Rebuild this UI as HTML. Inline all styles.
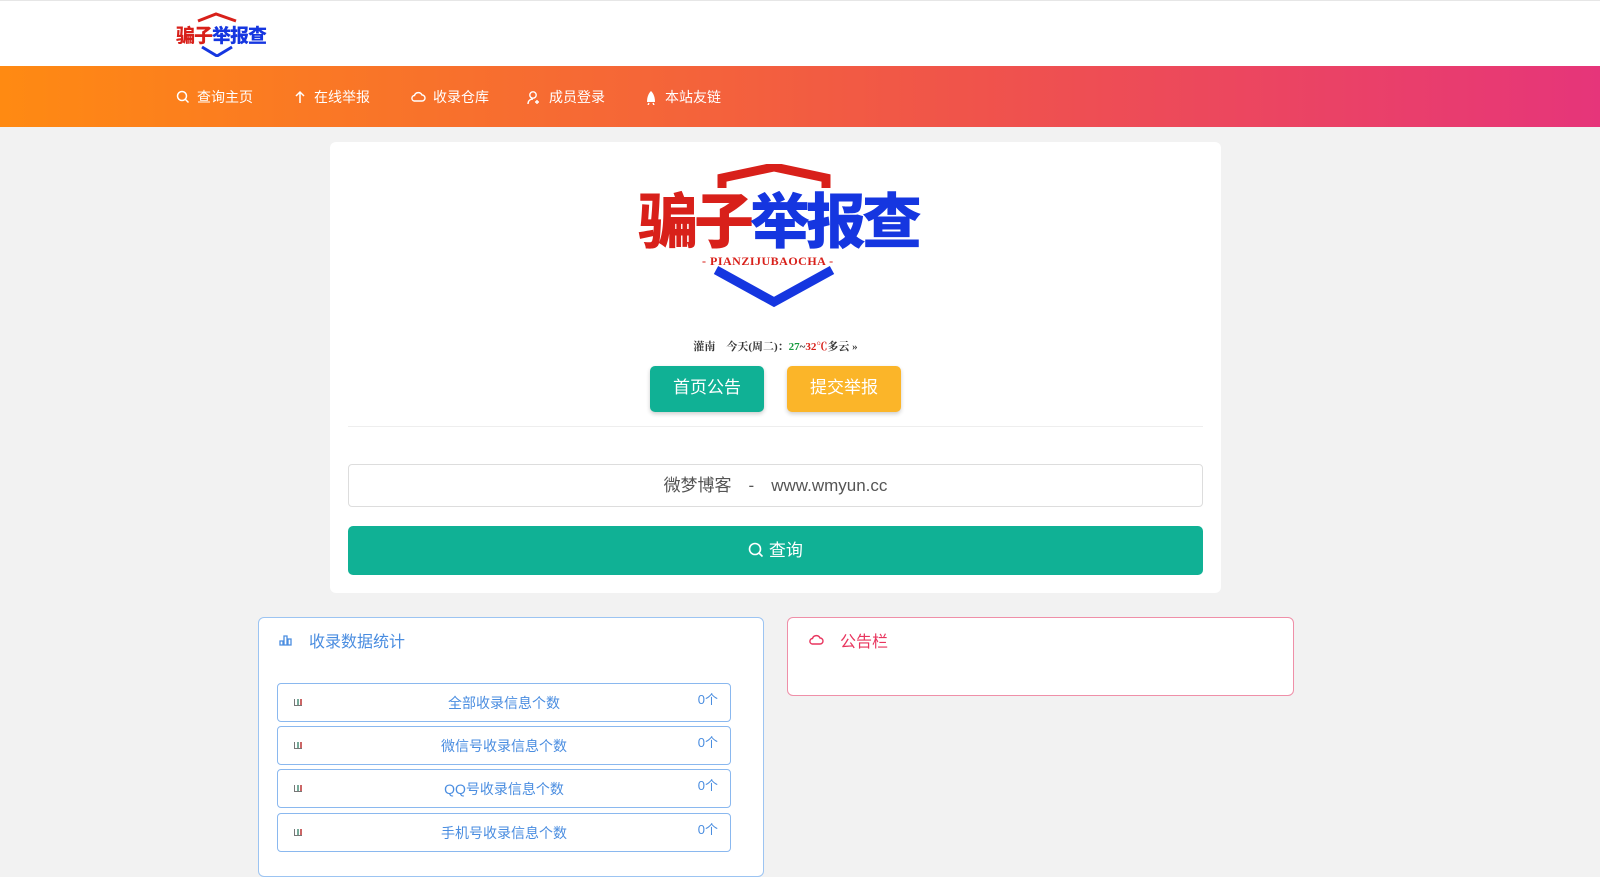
<!DOCTYPE html>
<html><head><meta charset="utf-8"><style>
*{margin:0;padding:0;box-sizing:border-box}
body{width:1600px;height:860px;overflow:hidden;background:#f2f2f2;font-family:"Liberation Sans","Noto Sans CJK SC",sans-serif}
.top{height:66px;background:#fff;border-top:1px solid #e6e6e6;position:relative}
.nav{height:61px;background:linear-gradient(90deg,#ff8a12,#f0544a 60%,#e6357a);position:relative;color:#fff;font-size:14px}
.nav span{position:absolute;top:21px;display:flex;align-items:center;gap:7px}
.card{position:absolute;left:330px;top:142px;width:891px;height:451px;background:#fff;border-radius:6px}
.logo{position:absolute}
.logo .t{position:absolute;font-weight:900;letter-spacing:-4px;white-space:nowrap}
.btn{position:absolute;top:224px;height:46px;width:114px;border-radius:5px;color:#fff;font-size:17px;text-align:center;line-height:44px;box-shadow:0 2px 4px rgba(0,0,0,.2)}
.inp{position:absolute;left:18px;top:322px;width:855px;height:43px;border:1px solid #ddd;border-radius:4px;text-align:center;line-height:41px;font-size:17px;color:#555}
.q{position:absolute;left:18px;top:384px;width:855px;height:49px;background:#10b195;border-radius:5px;color:#fff;font-size:17px;text-align:center;line-height:49px}
.box{position:absolute;background:#fff;border-radius:6px}
.row{position:absolute;left:18px;width:454px;height:39px;border:1px solid #8ab8ef;border-radius:4px;color:#4a8de0;font-size:14px;text-align:center;line-height:39px}
.row i{position:absolute;left:16px;top:15px;width:8px;height:7px;border-left:1px solid #777;border-bottom:1px solid #777;background:linear-gradient(90deg,transparent 2px,#7a9 2px,#7a9 4px,transparent 4px,transparent 5px,#c66 5px)}
.row b{position:absolute;right:12px;top:-4px;font-weight:normal;font-size:13px}
</style></head><body>
<div class="top">
 <div class="logo" style="left:176px;top:10px;width:86px;height:46px">
  <svg width="86" height="46" style="position:absolute;left:0;top:0"><path d="M22 10 L40 3 L60 10" stroke="#d8201a" stroke-width="3" fill="none"/><path d="M26 36 L41 45 L56 36" stroke="#1536e0" stroke-width="3" fill="none"/></svg>
  <div class="t" style="left:0;top:10px;font-size:19px;letter-spacing:-1px;color:#d8201a">骗子<span style="color:#1536e0">举报查</span></div>
 </div>
</div>
<div class="nav">
 <span style="left:176px"><svg width="14" height="14"><circle cx="6" cy="6" r="4.5" stroke="#fff" stroke-width="1.5" fill="none"/><path d="M9.5 9.5L12.5 12.5" stroke="#fff" stroke-width="1.5"/></svg>查询主页</span>
 <span style="left:293px"><svg width="14" height="14"><path d="M7 13V2M3 6L7 2L11 6" stroke="#fff" stroke-width="1.5" fill="none"/></svg>在线举报</span>
 <span style="left:410px"><svg width="16" height="14"><path d="M4 11H12A3 3 0 0 0 12 5A4 4 0 0 0 4.5 5.5A2.8 2.8 0 0 0 4 11Z" stroke="#fff" stroke-width="1.4" fill="none"/></svg>收录仓库</span>
 <span style="left:527px"><svg width="15" height="15"><circle cx="6" cy="5" r="3.2" stroke="#fff" stroke-width="1.4" fill="none"/><path d="M1 14C1 10 4 9 6 9M10 10V14M8 12H12" stroke="#fff" stroke-width="1.4" fill="none"/></svg>成员登录</span>
 <span style="left:644px"><svg width="14" height="15"><path d="M7 1C4 4 3 8 3 12H11C11 8 10 4 7 1Z" fill="#fff"/><path d="M5 13L4 15M9 13L10 15" stroke="#fff" stroke-width="1.4"/></svg>本站友链</span>
</div>
<div class="card">
 <div class="logo" style="left:308px;top:22px;width:280px;height:145px">
  <svg width="280" height="145" style="position:absolute;left:0;top:0"><path d="M84 24 L84 14 L136 3 L188 14 L188 24" stroke="#d8201a" stroke-width="9" fill="none"/><path d="M78 106 L136 138 L194 106" stroke="#1536e0" stroke-width="9" fill="none"/></svg>
  <div class="t" style="left:0;top:24px;font-size:60px;line-height:70px;color:#d8201a">骗子<span style="color:#1536e0">举报查</span></div>
  <div style="position:absolute;left:64px;top:90px;font-family:'Liberation Serif',serif;font-weight:bold;font-size:12px;color:#d8201a;letter-spacing:.5px">- PIANZIJUBAOCHA -</div>
 </div>
 <div style="position:absolute;left:0;width:891px;top:196px;text-align:center;font-family:'Liberation Serif','Noto Serif CJK SC',serif;font-size:11px;font-weight:bold;color:#333">灌南　今天(周二)：<span style="color:#169a3e">27</span>~<span style="color:#d8201a">32℃</span>多云 »</div>
 <div class="btn" style="left:320px;background:#10b195">首页公告</div>
 <div class="btn" style="left:457px;background:#fbb529">提交举报</div>
 <div style="position:absolute;left:18px;top:284px;width:855px;border-top:1px solid #eee"></div>
 <div class="inp">微梦博客　-　www.wmyun.cc</div>
 <div class="q"><svg width="16" height="16" style="vertical-align:-2px"><circle cx="7" cy="7" r="5.5" stroke="#fff" stroke-width="1.6" fill="none"/><path d="M11 11L14.5 14.5" stroke="#fff" stroke-width="1.6"/></svg> 查询</div>
</div>
<div class="box" style="left:258px;top:617px;width:506px;height:260px;border:1px solid #9cc4f2">
 <div style="position:absolute;left:20px;top:10px;color:#4a8de0;font-size:16px;display:flex;align-items:center;gap:16px"><svg width="14" height="12"><path d="M1 11V7H4V11ZM5 11V2H8V11ZM9 11V5H12V11Z" stroke="#4a8de0" stroke-width="1.3" fill="none"/></svg>收录数据统计</div>
 <div class="row" style="top:65px"><i></i>全部收录信息个数<b>0个</b></div>
 <div class="row" style="top:108px"><i></i>微信号收录信息个数<b>0个</b></div>
 <div class="row" style="top:151px"><i></i>QQ号收录信息个数<b>0个</b></div>
 <div class="row" style="top:195px"><i></i>手机号收录信息个数<b>0个</b></div>
</div>
<div class="box" style="left:787px;top:617px;width:507px;height:79px;border:1px solid #ef8fa8">
 <div style="position:absolute;left:20px;top:10px;color:#e8355e;font-size:16px;display:flex;align-items:center;gap:16px"><svg width="16" height="14"><path d="M4 11H12A3 3 0 0 0 12 5A4 4 0 0 0 4.5 5.5A2.8 2.8 0 0 0 4 11Z" stroke="#e8355e" stroke-width="1.4" fill="none"/></svg>公告栏</div>
</div>
</body></html>
